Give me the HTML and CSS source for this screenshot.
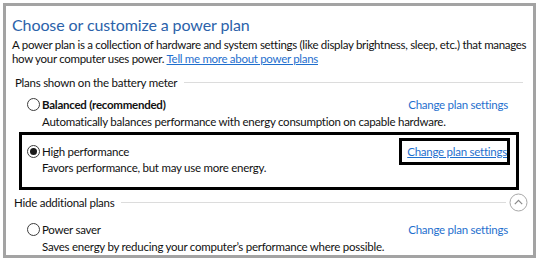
FILE: index.html
```html
<!DOCTYPE html>
<html>
<head>
<meta charset="utf-8">
<link rel="stylesheet" href="styles.css">
</head>
<body>
<div class="panel">
  <h1 class="title">Choose or customize a power plan</h1>
  <p class="intro">A power plan is a collection of hardware and system settings (like display brightness, sleep, etc.) that manages<br>how your computer uses power. <a class="link" href="#">Tell me more about power plans</a></p>

  <div class="group-head">
    <span class="group-label">Plans shown on the battery meter</span>
    <span class="rule"></span>
  </div>

  <div class="plan first">
    <div class="plan-row">
      <span class="radio"></span>
      <span class="plan-name bold">Balanced (recommended)</span>
      <a class="plan-link" href="#">Change plan settings</a>
    </div>
    <div class="plan-desc">Automatically balances performance with energy consumption on capable hardware.</div>
  </div>

  <div class="plan selected">
    <div class="plan-row">
      <span class="radio checked"></span>
      <span class="plan-name">High performance</span>
      <a class="plan-link focus" href="#">Change plan settings</a>
    </div>
    <div class="plan-desc">Favors performance, but may use more energy.</div>
  </div>

  <div class="group-head second">
    <span class="group-label">Hide additional plans</span>
    <span class="rule"></span>
    <span class="chev">
      <svg width="19" height="19" viewBox="0 0 19 19"><circle cx="9.5" cy="9.5" r="8.5" fill="#fff" stroke="#a8a8a8" stroke-width="1"/><path d="M5.8 11.2 L9.5 7.4 L13.2 11.2" fill="none" stroke="#8a8a8a" stroke-width="1.2"/></svg>
    </span>
  </div>

  <div class="plan last">
    <div class="plan-row">
      <span class="radio"></span>
      <span class="plan-name">Power saver</span>
      <a class="plan-link" href="#">Change plan settings</a>
    </div>
    <div class="plan-desc">Saves energy by reducing your computer’s performance where possible.</div>
  </div>
</div>
</body>
</html>
```

FILE: styles.css
```css
* { box-sizing: border-box; }
html, body { margin: 0; padding: 0; background: #fff; }
body {
  font-family: Lato, "Noto Sans", sans-serif;
  font-size: 11.5px;
  letter-spacing: -0.25px;
  color: #111;
}
.panel {
  margin: 3px;
  width: 533px;
  height: 255px;
  border: 3px solid #a3a3a3;
  padding: 0 0 0 6px;
  overflow: hidden;
}
.title {
  margin: 9px 0 0 0;
  font-weight: normal;
  font-size: 16px;
  letter-spacing: -0.1px;
  line-height: 20px;
  color: #2b62aa;
}
.intro {
  margin: 3px 0 0 0;
  line-height: 14px;
  letter-spacing: -0.3px;
  white-space: nowrap;
}
.link, .plan-link {
  color: #1f6fce;
}
.link { text-decoration: underline; }
.group-head {
  display: flex;
  align-items: center;
  margin: 8px 0 0 3px;
  height: 16px;
  width: 508px;
}
.group-label { white-space: nowrap; }
.rule {
  flex: 1;
  height: 1px;
  background: #dcdcdc;
  margin-left: 7px;
}
.group-head.second {
  margin: 3px 0 0 2px;
  width: 514px;
  height: 19px;
}
.group-head.second .rule { margin-right: 3px; }
.chev { display: flex; width: 19px; height: 19px; }
.plan {
  margin-left: 7px;
  width: 500px;
  border: 3px solid transparent;
  padding: 2px 8px 0 5px;
}
.plan.selected {
  border-color: #000;
  padding: 0 6px 12px 5px;
}
.plan.last { margin-top: 3px; }
.plan-row {
  display: flex;
  align-items: center;
  height: 18px;
}
.selected .plan-row {
  height: 27px;
  margin-top: 3px;
}
.radio {
  width: 13px;
  height: 13px;
  border: 1px solid #3c3c3c;
  border-radius: 50%;
  background: #fff;
  display: flex;
  align-items: center;
  justify-content: center;
  margin-right: 2px;
  flex: none;
}
.radio.checked::after {
  content: "";
  width: 7px;
  height: 7px;
  border-radius: 50%;
  background: #1a1a1a;
}
.plan-name { flex: 1; white-space: nowrap; }
.bold { font-weight: bold; }
.plan-link { text-decoration: none; white-space: nowrap; }
.plan-link.focus {
  text-decoration: underline;
  border: 3px solid #000;
  padding: 0 0 0 5px;
  height: 27px;
  display: flex;
  align-items: center;
}
.plan-desc {
  padding-left: 15px;
  line-height: 15px;
  white-space: nowrap;
}
.first .plan-desc { margin-top: 1px; }
.selected .plan-desc { margin-top: -5px; }
.last .plan-desc { margin-top: 1px; }
```
